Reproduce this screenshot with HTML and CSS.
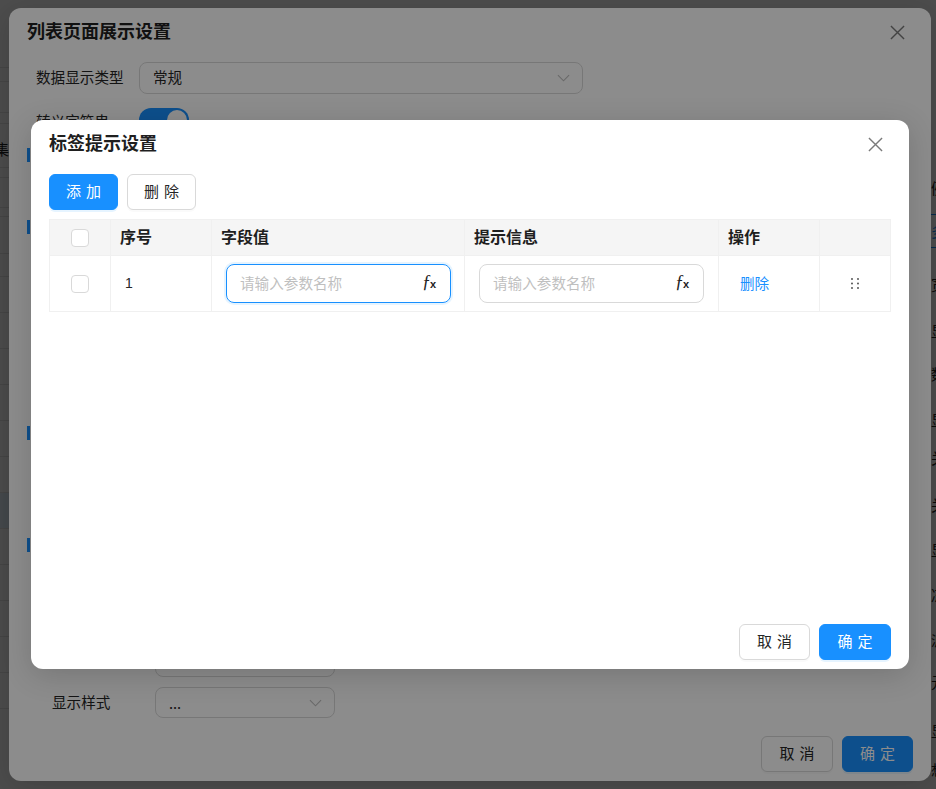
FILE: index.html
```html
<!DOCTYPE html>
<html lang="zh-CN">
<head>
<meta charset="utf-8">
<title>标签提示设置</title>
<link rel="stylesheet" href="styles.css">
</head>
<body>
<div class="page">
  <div class="rail-left">
    <div class="lrow h60"></div><div class="lrow h14"></div><div class="lrow h31"></div><div class="lrow h11"></div>
    <div class="lrow h44 cut-text"><span>集</span></div><div class="lrow h10"></div><div class="lrow h30"></div><div class="lrow h9"></div>
    <div class="lrow h37"></div><div class="lrow h23"></div><div class="lrow h36"></div><div class="lrow h36"></div>
    <div class="lrow h36"></div><div class="lrow h36"></div><div class="lrow h36"></div><div class="lrow h36"></div>
    <div class="lrow h36 hl"></div><div class="lrow h36"></div><div class="lrow h36"></div><div class="lrow h36"></div>
    <div class="lrow h36"></div><div class="lrow h36"></div>
  </div>
  <div class="rail-right">
    <div class="rcell t178">例</div>
    <div class="rcell t-link">多</div>
    <div class="rcell t36a">宽</div>
    <div class="rcell t43">显</div>
    <div class="rcell t46">数</div>
    <div class="rcell t38">显</div>
    <div class="rcell t47">关</div>
    <div class="rcell t45">关</div>
    <div class="rcell t45">显</div>
    <div class="rcell t45">冻</div>
    <div class="rcell t42">派</div>
    <div class="rcell t49">元</div>
    <div class="rcell t39">显</div>
    <div class="rcell t39">想</div>
  </div>
</div>
<div class="mask"></div>

<section class="modal outer">
  <header class="outer-head">
    <h2 class="title">列表页面展示设置</h2>
    <svg class="close" viewBox="0 0 16 16"><path d="M1 1l14 14M15 1L1 15"/></svg>
  </header>
  <div class="form-row first-row">
    <label class="label">数据显示类型</label>
    <div class="select wide"><span class="val">常规</span>
      <svg class="chev" viewBox="0 0 14 8"><path d="M1 1l6 6 6-6"/></svg>
    </div>
  </div>
  <div class="form-row switch-row">
    <label class="label">转义字符串</label>
    <div class="switch"><i class="knob"></i></div>
  </div>
  <div class="section sec-a"></div>
  <div class="section sec-b"></div>
  <div class="section sec-c"></div>
  <div class="section sec-d">
    <div class="select narrow stub"></div>
    <div class="form-row style-row">
      <label class="label">显示样式</label>
      <div class="select narrow"><span>...</span>
        <svg class="chev" viewBox="0 0 14 8"><path d="M1 1l6 6 6-6"/></svg>
      </div>
    </div>
  </div>
  <footer class="outer-foot">
    <button class="btn">取 消</button>
    <button class="btn primary">确 定</button>
  </footer>
</section>

<div class="mask"></div>

<section class="modal inner">
  <header class="inner-head">
    <h2 class="title">标签提示设置</h2>
    <svg class="close" viewBox="0 0 16 16"><path d="M1 1l14 14M15 1L1 15"/></svg>
  </header>
  <div class="toolbar">
    <button class="btn primary">添 加</button>
    <button class="btn">删 除</button>
  </div>
  <div class="table">
    <div class="tr thead">
      <div class="td c-check"><i class="check"></i></div>
      <div class="td c-no">序号</div>
      <div class="td c-field">字段值</div>
      <div class="td c-info">提示信息</div>
      <div class="td c-op">操作</div>
      <div class="td c-drag"></div>
    </div>
    <div class="tr tbody">
      <div class="td c-check"><i class="check"></i></div>
      <div class="td c-no num">1</div>
      <div class="td c-field">
        <div class="input focus"><span class="ph">请输入参数名称</span><span class="fx"><em>ƒ</em><small>x</small></span></div>
      </div>
      <div class="td c-info">
        <div class="input"><span class="ph">请输入参数名称</span><span class="fx"><em>ƒ</em><small>x</small></span></div>
      </div>
      <div class="td c-op"><a class="link">删除</a></div>
      <div class="td c-drag">
        <svg class="drag" viewBox="0 0 8 11"><circle cx="1" cy="1" r=".9"/><circle cx="7" cy="1" r=".9"/><circle cx="1" cy="5.5" r=".9"/><circle cx="7" cy="5.5" r=".9"/><circle cx="1" cy="10" r=".9"/><circle cx="7" cy="10" r=".9"/></svg>
      </div>
    </div>
  </div>
  <footer class="inner-foot">
    <button class="btn">取 消</button>
    <button class="btn primary">确 定</button>
  </footer>
</section>
</body>
</html>
```
FILE: styles.css
```css
* { box-sizing: border-box; }
html, body { margin: 0; height: 100%; overflow: hidden; }
body {
  font-family: "Noto Sans CJK SC", "Liberation Sans", sans-serif;
  font-size: 14.6px;
  color: #262626;
  background: #fff;
}
.page {
  position: fixed;
  inset: 0;
  display: flex;
  justify-content: space-between;
  overflow: hidden;
  background: #fff;
}
.rail-left { width: 9px; overflow: hidden; display: flex; flex-direction: column; }
.lrow { border-bottom: 1px solid #e8e8e8; flex: none; }
.h60 { height: 68px; }
.h14 { height: 14px; }
.h31 { height: 31px; }
.h11 { height: 11px; }
.h44 { height: 44px; }
.h10 { height: 10px; }
.h30 { height: 30px; }
.h9 { height: 9px; }
.h37 { height: 37px; }
.h23 { height: 23px; }
.h36 { height: 36px; }
.hl { background: #e6f4ff; }
.cut-text { position: relative; direction: rtl; line-height: 50px; white-space: nowrap; color: #222; }
.rail-right {
  width: 5px;
  overflow: hidden;
  display: flex;
  flex-direction: column;
  padding-top: 178px;
}
.rcell { flex: none; white-space: nowrap; line-height: 20px; color: #222; }
.t178 { height: 36px; }
.t-link { height: 34px; color: #1890ff; box-shadow: inset 0 1px #1890ff, inset 0 -1px #1890ff; line-height: 34px; }
.t36a { height: 47px; margin-top: 26px; }
.t47 { height: 47px; }
.t43 { height: 43px; }
.t46 { height: 46px; }
.t38 { height: 38px; }
.t45 { height: 45px; }
.t42 { height: 42px; }
.t49 { height: 49px; }
.t39 { height: 39px; }
.mask { position: fixed; inset: 0; background: rgba(0, 0, 0, .45); }

.modal {
  position: fixed;
  display: flex;
  flex-direction: column;
  background: #fff;
  border-radius: 12px;
  box-shadow: 0 6px 30px rgba(0, 0, 0, .16);
}
.outer { left: 9px; top: 8px; width: 922px; height: 773px; padding: 0 18px 9px 18px; overflow: hidden; }
.inner { left: 31px; top: 120px; width: 878px; height: 549px; padding: 0 18px 9px; }

.title { margin: 0; padding-bottom: 2px; font-size: 18px; line-height: 24px; font-weight: 700; color: #1f1f1f; }
.close { width: 15px; height: 15px; margin-top: 2px; fill: none; stroke: #7a7a7a; stroke-width: 1.5; }
.outer-head { display: flex; justify-content: space-between; align-items: center; height: 46px; padding-right: 8px; }
.inner-head { display: flex; justify-content: space-between; align-items: center; height: 46px; padding-right: 8px; }

.form-row { display: flex; align-items: center; }
.first-row { margin-top: 8px; padding-left: 9px; }
.first-row .label { padding-bottom: 4px; }
.switch-row { margin-top: 14px; padding-left: 9px; }
.label { width: 103px; flex: none; white-space: nowrap; }
.select {
  display: flex;
  align-items: center;
  justify-content: space-between;
  height: 32px;
  border: 1px solid #d9d9d9;
  border-radius: 8px;
  padding: 0 12px 0 13px;
}
.val { padding-bottom: 4px; }
.wide { width: 444px; }
.narrow { width: 180px; }
.chev { width: 13px; height: 8px; fill: none; stroke: #bfbfbf; stroke-width: 1.2; }
.switch {
  width: 50px;
  height: 24px;
  border-radius: 12px;
  background: #1890ff;
  display: flex;
  align-items: center;
  justify-content: flex-end;
  padding-right: 2px;
}
.knob { width: 20px; height: 20px; border-radius: 50%; background: #fff; }

.section { position: relative; flex: none; }
.section::before {
  content: "";
  position: absolute;
  left: 0;
  top: 0;
  width: 3px;
  height: 14px;
  background: #1890ff;
}
.sec-a { margin-top: 16px; height: 72px; }
.sec-b { height: 206px; }
.sec-c { height: 112px; }
.sec-d { height: 180px; padding-top: 108px; }
.stub { margin-left: 128px; height: 31px; }
.style-row { margin-top: 10px; padding-left: 25px; }
.style-row .label { width: 103px; padding-bottom: 2px; }
.style-row .select { height: 31px; }

.outer-foot, .inner-foot { display: flex; justify-content: flex-end; gap: 9px; margin-top: auto; }
.btn {
  font: inherit;
  color: #262626;
  width: 71px;
  height: 36px;
  padding: 0 0 4px;
  border: 1px solid #d9d9d9;
  border-radius: 6px;
  background: #fff;
  box-shadow: 0 2px 0 rgba(0, 0, 0, .02);
  word-spacing: 1.5px;
  font-size: 15px;
}
.primary { color: #fff; background: #1890ff; border-color: #1890ff; box-shadow: 0 2px 0 rgba(5, 145, 255, .1); }
.outer-foot .btn:first-child { width: 72px; }
.toolbar { display: flex; gap: 9px; margin-top: 8px; }
.toolbar .btn { width: 69px; }

.table { margin-top: 9px; width: 842px; border: 1px solid #f0f0f0; border-bottom: 0; }
.tr { display: flex; border-bottom: 1px solid #f0f0f0; }
.thead { height: 36px; background: #f5f5f5; font-weight: 700; font-size: 16px; color: #1f1f1f; }
.thead .td:not(.c-check) { padding-bottom: 4px; }
.tbody { height: 56px; }
.td {
  flex: none;
  display: flex;
  align-items: center;
  padding: 0 9px;
  border-right: 1px solid #f0f0f0;
}
.td:last-child { border-right: 0; }
.c-check { width: 61px; justify-content: center; padding: 0; }
.c-no { width: 101px; }
.c-field { width: 253px; padding: 0 14px; }
.thead .c-field, .thead .c-info { padding-left: 9px; padding-right: 9px; }
.c-info { width: 254px; padding: 0 14px; }
.c-op { width: 101px; }
.c-drag { width: 70px; justify-content: center; padding: 0; }
.num { padding-left: 14px; padding-bottom: 1px; font-family: "Liberation Sans", sans-serif; font-size: 14px; }
.check { width: 18px; height: 18px; border: 1px solid #d9d9d9; border-radius: 4px; background: #fff; }
.input {
  flex: none;
  width: 225px;
  height: 39px;
  display: flex;
  align-items: center;
  justify-content: space-between;
  padding: 0 14px 0 13px;
  border: 1px solid #d9d9d9;
  border-radius: 8px;
}
.focus { border-color: #1890ff; box-shadow: 0 0 0 2px rgba(5, 145, 255, .1); }
.ph { color: #bfbfbf; padding-bottom: 2px; }
.fx { font-family: "Liberation Serif", serif; color: #222; font-size: 18px; line-height: 1; padding-bottom: 3px; }
.fx em { font-style: italic; }
.fx small { font-size: 11px; font-weight: 700; font-family: "Liberation Sans", sans-serif; margin-left: -1px; }
.link { color: #1890ff; padding-left: 12px; padding-bottom: 2px; }
.drag { width: 8px; height: 11px; fill: #444; }
.inner-foot .btn { width: 72px; }
.inner-foot .btn:first-child { width: 71px; }
```
